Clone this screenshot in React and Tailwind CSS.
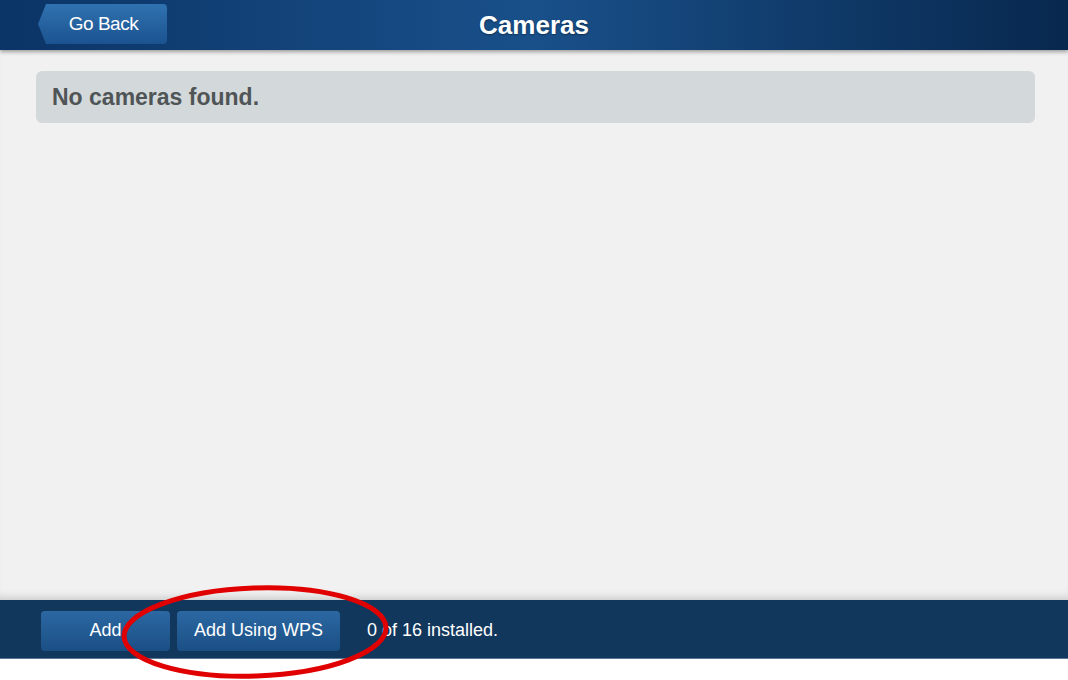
import { useState } from "react";

const App = () => {

  const [count] = useState(0);

  return (

    <div className="relative w-[1068px] h-[680px] overflow-hidden bg-white flex flex-col font-['Liberation_Sans',Arial,sans-serif]">

      {/* HEADER */}

      <div className="h-[50px] shrink-0 relative flex items-center bg-gradient-to-r from-[#0b3466] via-[#19508a] to-[#08284e] shadow-[0_2px_4px_rgba(0,0,0,0.35)] z-10">

        <button
          className="ml-[38px] mt-[-2px] h-[40px] w-[129px] relative flex items-center justify-center text-white text-[19px] rounded-r-[4px] bg-gradient-to-b from-[#3072b0] to-[#1b5390] [clip-path:polygon(8px_0,100%_0,100%_100%,8px_100%,0_50%)]"
        >

          <span className="pl-[2px] -tracking-[0.5px]">Go Back</span>

        </button>

        <h1 className="absolute left-0 right-0 text-center text-white text-[26px] font-bold pointer-events-none [text-shadow:0_1px_2px_rgba(0,0,0,0.4)]">

          Cameras

        </h1>

      </div>

      {/* CONTENT */}

      <div className="flex-1 bg-[#f1f1f1] px-[36px] pt-[21px] shadow-[inset_0_-8px_8px_-6px_rgba(0,0,0,0.18)]">

        <div className="w-[999px] h-[52px] rounded-[6px] bg-[#d3d8da] flex items-center pl-[16px] text-[23px] font-bold text-[#4f5457]">

          No cameras found.

        </div>

      </div>

      {/* FOOTER */}

      <div className="h-[59px] shrink-0 bg-[#11375d] flex items-center pl-[41px] gap-[7px] border-b border-[#5a7896]">

        <button className="w-[129px] h-[40px] mt-[3px] rounded-[4px] bg-gradient-to-b from-[#2c68a3] to-[#1a4f85] text-white text-[18px]">

          Add

        </button>

        <button className="w-[163px] h-[40px] mt-[3px] rounded-[4px] bg-gradient-to-b from-[#2c68a3] to-[#1a4f85] text-white text-[18px]">

          Add Using WPS

        </button>

        <span className="ml-[20px] mt-[3px] text-white text-[18px]">

          {count} of 16 installed.

        </span>

      </div>

      <div className="h-[21px] shrink-0 bg-white" />

      {/* RED CIRCLE ANNOTATION */}

      <svg
        className="absolute left-0 top-0 pointer-events-none"
        width="1068"
        height="680"
      >

        <ellipse
          cx="255"
          cy="632"
          rx="131"
          ry="44"
          fill="none"
          stroke="#e10000"
          strokeWidth="5"
          transform="rotate(-2 255 632)"
        />

      </svg>

    </div>

  );

};

export default App;
